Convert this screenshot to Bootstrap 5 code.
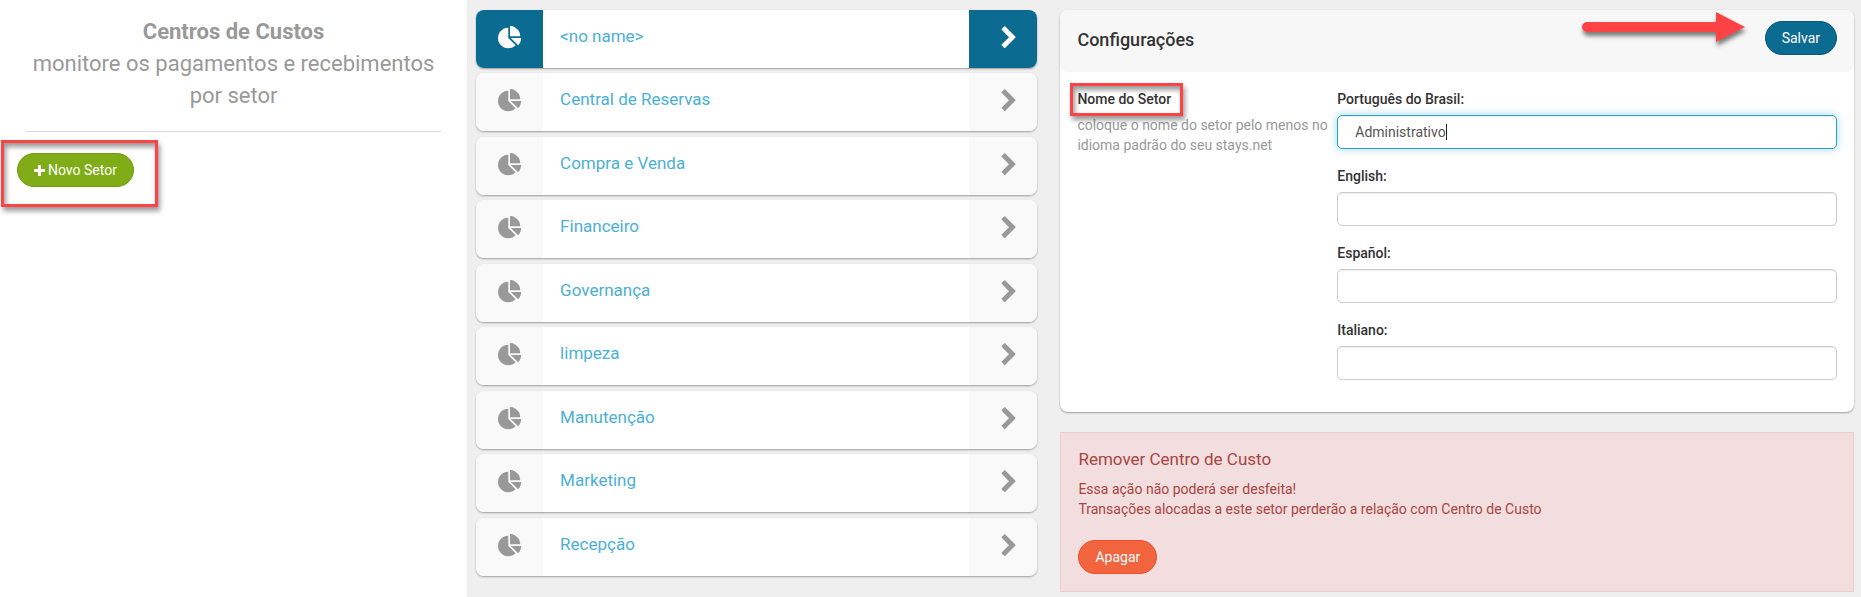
<!DOCTYPE html>
<html lang="pt-BR">
<head>
<meta charset="utf-8">
<meta name="viewport" content="width=device-width, initial-scale=1">
<title>Centros de Custos</title>
<link rel="stylesheet" href="https://cdn.jsdelivr.net/npm/bootstrap@5.3.0/dist/css/bootstrap.min.css">
<style>
  :root { --brand: #0b6b91; --muted: #999; --note: #ff4344; }
  body { font: 14px/20px Roboto, "Liberation Sans", sans-serif; color: #333; background: #efefef; }
  svg { display: block; fill: currentColor; }

  .sidebar { width: 25.1%; padding: 0 17px; background: #fff; }
  .sidebar h1 { font-size: 22px; line-height: 32px; color: var(--muted); padding: 16px 8px 0; margin: 0; font-weight: 400; }
  .sidebar hr { margin: 19px 9px 21px; border-color: #ddd; opacity: 1; }

  .main-grid { display: grid; grid-template-columns: 29fr 41fr; column-gap: 23px; padding: 10px 7px 6px 9px; align-items: start; }
  .panel, .sector { border-radius: 8px; box-shadow: 0 1px 2px rgba(0,0,0,.35); background: #fff; }

  .sector { height: 58px; margin-bottom: 5px; overflow: hidden; color: #4bafd6; font-size: 17px; text-decoration: none; }
  li:nth-child(even) .sector { margin-bottom: 6px; }
  .sector-icon, .sector-arrow { background: #f9f9f9; color: var(--muted); padding-top: 16px; flex: none; }
  .sector-icon { width: 67px; padding-left: 22px; }
  .sector-arrow { width: 68px; padding-left: 28px; }
  .sector-name { padding: 16px 17px; }
  .sector.active .sector-icon, .sector.active .sector-arrow { background: var(--brand); color: #fff; }

  .pill { border-radius: 17px; font-size: 14px; line-height: 20px; padding: 6px 16px; color: #fff; border: 1px solid; }
  .pill:hover { color: #fff; }
  .pill-green { background: #80ac18; border-color: #719a12; }
  .pill-green svg { margin-right: 3px; }
  .pill-blue { background: var(--brand); border-color: #095a7b; }
  .pill-orange { background: #f2643d; border-color: #f04e27; }

  .panel-top { background: #f7f7f7; border-radius: 8px; padding: 11px 17px 17px; }
  .panel-top h2 { font-size: 18px; line-height: 24px; font-weight: 500; margin: 0; padding-top: 7px; }
  .panel-fields { display: grid; grid-template-columns: 13fr 25fr; padding: 17px 17px 15px; }
  .panel-fields h3, .panel-fields label { font-size: 14px; line-height: 20px; font-weight: 500; margin: 0 0 6px; }
  .panel-fields p { color: var(--muted); margin: 0; }
  .lang { margin-bottom: 17px; }
  .lang input { height: 34px; padding: 6px 17px; border: 1px solid #ccc; border-radius: 5px; font-size: 14px; line-height: 20px; color: #555; box-shadow: inset 0 1px 1px rgba(0,0,0,.075); }
  .lang input.editing { border-color: #2a9fd0; box-shadow: inset 0 1px 1px rgba(0,0,0,.075), 0 0 8px rgba(91,192,222,.6); }
  .caret-bar { position: absolute; left: 109px; bottom: 9px; width: 1px; height: 16px; background: #222; }

  .danger-box { margin-top: 20px; background: #f2dede; border: 1px solid #ebccd1; color: #a94442; padding: 16px 17px 17px; }
  .danger-box h2 { font-size: 17px; line-height: 20px; font-weight: 400; margin: 0 0 10px; }
  .danger-box p { margin: 0 0 21px; }

  /* Highlights laid over the interface */
  .note { position: absolute; border: 3px solid var(--note); box-shadow: 2px 4px 5px rgba(0,0,0,.4), inset 2px 4px 5px rgba(0,0,0,.4); pointer-events: none; }
  .note-new { left: -16px; top: -13px; width: 157px; height: 67px; }
  .note-name { left: -7px; top: -6px; width: 113px; height: 33px; }
  .note-arrow { position: absolute; right: 91px; top: -10px; fill: var(--note); filter: drop-shadow(1px 4px 2px rgba(0,0,0,.5)); overflow: visible; }
</style>
</head>
<body>
<svg width="0" height="0" class="position-absolute" aria-hidden="true">
  <symbol id="pie" viewBox="0 0 1792 1792"><path d="M768 890l546 546q-106 108-247.500 168t-298.500 60q-209 0-385.500-103t-279.500-279.500-103-385.500 103-385.500 279.500-279.500 385.500-103v762zm187 6h773q0 157-60 298.500t-168 247.500zm709-128h-768v-768q209 0 385.500 103t279.500 279.500 103 385.500z"/></symbol>
  <symbol id="chevron" viewBox="0 0 1792 1792"><path d="M1363 877l-742 742q-19 19-45 19t-45-19l-166-166q-19-19-19-45t19-45l531-531-531-531q-19-19-19-45t19-45l166-166q19-19 45-19t45 19l742 742q19 19 19 45t-19 45z"/></symbol>
  <symbol id="plus" viewBox="192 128 1408 1408"><path d="M1600 736v192q0 40-28 68t-68 28h-416v416q0 40-28 68t-68 28h-192q-40 0-68-28t-28-68v-416h-416q-40 0-68-28t-28-68v-192q0-40 28-68t68-28h416v-416q0-40 28-68t68-28h192q40 0 68 28t28 68v416h416q40 0 68 28t28 68z"/></symbol>
</svg>
<div class="d-flex min-vh-100">
  <aside class="sidebar flex-shrink-0">
    <h1 class="text-center"><strong>Centros de Custos</strong><br>monitore os pagamentos e recebimentos por setor</h1>
    <hr>
    <div class="position-relative d-inline-block">
      <button type="button" class="btn pill pill-green d-flex align-items-center"><svg width="11" height="11" aria-hidden="true"><use href="#plus"/></svg>Novo Setor</button>
      <span class="note note-new"></span>
    </div>
  </aside>

  <main class="main-grid flex-grow-1">
    <ul class="list-unstyled m-0" id="sectors">
      <li><a href="#" class="sector active d-flex"><span class="sector-icon"><svg width="24" height="24"><use href="#pie"/></svg></span><span class="sector-name flex-grow-1">&lt;no name&gt;</span><span class="sector-arrow"><svg width="24" height="24"><use href="#chevron"/></svg></span></a></li>
      <li><a href="#" class="sector d-flex"><span class="sector-icon"><svg width="24" height="24"><use href="#pie"/></svg></span><span class="sector-name flex-grow-1">Central de Reservas</span><span class="sector-arrow"><svg width="24" height="24"><use href="#chevron"/></svg></span></a></li>
      <li><a href="#" class="sector d-flex"><span class="sector-icon"><svg width="24" height="24"><use href="#pie"/></svg></span><span class="sector-name flex-grow-1">Compra e Venda</span><span class="sector-arrow"><svg width="24" height="24"><use href="#chevron"/></svg></span></a></li>
      <li><a href="#" class="sector d-flex"><span class="sector-icon"><svg width="24" height="24"><use href="#pie"/></svg></span><span class="sector-name flex-grow-1">Financeiro</span><span class="sector-arrow"><svg width="24" height="24"><use href="#chevron"/></svg></span></a></li>
      <li><a href="#" class="sector d-flex"><span class="sector-icon"><svg width="24" height="24"><use href="#pie"/></svg></span><span class="sector-name flex-grow-1">Governança</span><span class="sector-arrow"><svg width="24" height="24"><use href="#chevron"/></svg></span></a></li>
      <li><a href="#" class="sector d-flex"><span class="sector-icon"><svg width="24" height="24"><use href="#pie"/></svg></span><span class="sector-name flex-grow-1">limpeza</span><span class="sector-arrow"><svg width="24" height="24"><use href="#chevron"/></svg></span></a></li>
      <li><a href="#" class="sector d-flex"><span class="sector-icon"><svg width="24" height="24"><use href="#pie"/></svg></span><span class="sector-name flex-grow-1">Manutenção</span><span class="sector-arrow"><svg width="24" height="24"><use href="#chevron"/></svg></span></a></li>
      <li><a href="#" class="sector d-flex"><span class="sector-icon"><svg width="24" height="24"><use href="#pie"/></svg></span><span class="sector-name flex-grow-1">Marketing</span><span class="sector-arrow"><svg width="24" height="24"><use href="#chevron"/></svg></span></a></li>
      <li><a href="#" class="sector d-flex"><span class="sector-icon"><svg width="24" height="24"><use href="#pie"/></svg></span><span class="sector-name flex-grow-1">Recepção</span><span class="sector-arrow"><svg width="24" height="24"><use href="#chevron"/></svg></span></a></li>
    </ul>

    <div>
      <form class="panel">
        <div class="panel-top d-flex justify-content-between">
          <h2>Configurações</h2>
          <div class="position-relative">
            <svg class="note-arrow" width="166" height="32" viewBox="0 0 166 32" aria-hidden="true"><path d="M7 11H136V1L165 16 136 31V21H7A5 5 0 0 1 7 11Z"/></svg>
            <button type="button" class="btn pill pill-blue">Salvar</button>
          </div>
        </div>
        <div class="panel-fields">
          <div>
            <div class="position-relative">
              <h3>Nome do Setor</h3>
              <span class="note note-name"></span>
            </div>
            <p>coloque o nome do setor pelo menos no idioma padrão do seu stays.net</p>
          </div>
          <div>
            <div class="lang position-relative"><label for="pt" class="d-block">Português do Brasil:</label><input id="pt" type="text" class="form-control editing" value="Administrativo"><span class="caret-bar"></span></div>
            <div class="lang"><label for="en" class="d-block">English:</label><input id="en" type="text" class="form-control"></div>
            <div class="lang"><label for="es" class="d-block">Español:</label><input id="es" type="text" class="form-control"></div>
            <div class="lang"><label for="it" class="d-block">Italiano:</label><input id="it" type="text" class="form-control"></div>
          </div>
        </div>
      </form>

      <section class="danger-box">
        <h2>Remover Centro de Custo</h2>
        <p>Essa ação não poderá ser desfeita!<br>Transações alocadas a este setor perderão a relação com Centro de Custo</p>
        <button type="button" class="btn pill pill-orange">Apagar</button>
      </section>
    </div>
  </main>
</div>
<script src="https://cdn.jsdelivr.net/npm/bootstrap@5.3.0/dist/js/bootstrap.bundle.min.js"></script>
</body>
</html>
